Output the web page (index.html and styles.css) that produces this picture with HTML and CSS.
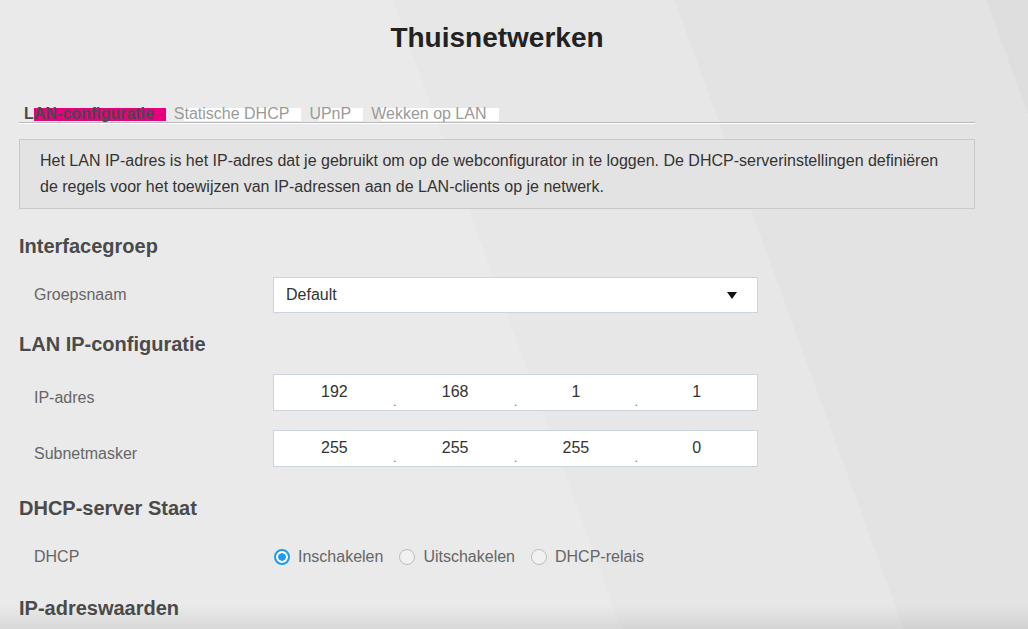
FILE: index.html
```html
<!DOCTYPE html>
<html lang="nl">
<head>
<meta charset="utf-8">
<title>Thuisnetwerken</title>
<link rel="stylesheet" href="styles.css">
</head>
<body>
<div class="page">
  <h1 class="title">Thuisnetwerken</h1>

  <nav class="tabs">
    <a class="tab tab--active"><span>LAN-configuratie</span></a>
    <a class="tab"><span>Statische DHCP</span></a>
    <a class="tab"><span>UPnP</span></a>
    <a class="tab"><span>Wekken op LAN</span></a>
  </nav>

  <div class="info">
    Het LAN IP-adres is het IP-adres dat je gebruikt om op de webconfigurator in te loggen. De DHCP-serverinstellingen definiëren<br>
    de regels voor het toewijzen van IP-adressen aan de LAN-clients op je netwerk.
  </div>

  <h2 class="section section--first">Interfacegroep</h2>
  <div class="row">
    <span class="label">Groepsnaam</span>
    <div class="select">
      <span>Default</span>
      <svg class="caret" width="10" height="7" viewBox="0 0 10 7"><polygon points="0,0 10,0 5,7" fill="#111"/></svg>
    </div>
  </div>

  <h2 class="section">LAN IP-configuratie</h2>
  <div class="row row--ip row--tight">
    <span class="label">IP-adres</span>
    <div class="ip">
      <span class="ip-part">192</span><span class="ip-dot">.</span>
      <span class="ip-part">168</span><span class="ip-dot">.</span>
      <span class="ip-part">1</span><span class="ip-dot">.</span>
      <span class="ip-part">1</span>
    </div>
  </div>
  <div class="row row--ip">
    <span class="label">Subnetmasker</span>
    <div class="ip">
      <span class="ip-part">255</span><span class="ip-dot">.</span>
      <span class="ip-part">255</span><span class="ip-dot">.</span>
      <span class="ip-part">255</span><span class="ip-dot">.</span>
      <span class="ip-part">0</span>
    </div>
  </div>

  <h2 class="section section--wide">DHCP-server Staat</h2>
  <div class="row">
    <span class="label">DHCP</span>
    <div class="radios">
      <label class="radio"><span class="radio-mark radio-mark--on"></span>Inschakelen</label>
      <label class="radio"><span class="radio-mark"></span>Uitschakelen</label>
      <label class="radio"><span class="radio-mark"></span>DHCP-relais</label>
    </div>
  </div>

  <h2 class="section section--mid">IP-adreswaarden</h2>
</div>
</body>
</html>
```

FILE: styles.css
```css
html, body {
  margin: 0;
  padding: 0;
  height: 629px;
  overflow: hidden;
}

body {
  font-family: "Liberation Sans", Arial, Helvetica, sans-serif;
  background:
    linear-gradient(to bottom, rgba(0,0,0,0) 605px, rgba(0,0,0,0.08) 629px),
    linear-gradient(70deg, #eaeaea 0 584px, #e7e7e7 584px 849px, #e3e3e3 849px 1142px, #dedede 1142px);
  background-repeat: no-repeat;
  background-size: 1028px 629px;
}

.page {
  width: 956px;
  margin-left: 19px;
}

.title {
  margin: 22px 0 0;
  font-size: 28px;
  line-height: 32px;
  font-weight: bold;
  color: #222;
  text-align: center;
}

.tabs {
  display: flex;
  align-items: flex-start;
  gap: 18px;
  margin-top: 54px;
  padding-left: 15px;
  padding-bottom: 1px;
  border-bottom: 1px solid #b9b9b9;
  box-shadow: 0 1px 0 #fff;
}

.tab {
  display: block;
  height: 13px;
  line-height: 12px;
  font-size: 16px;
  color: #9a9a9a;
  background: #fff;
  padding-right: 12px;
  white-space: nowrap;
  cursor: pointer;
}

.tab span {
  display: inline-block;
  margin-left: -10px;
}

.tab--active {
  background: #e6007e;
  color: #4a4a4a;
  font-weight: bold;
}

.info {
  margin-top: 16px;
  border: 1px solid #c9c9c9;
  background: #e3e3e3;
  padding: 8px 20px;
  font-size: 16px;
  line-height: 26px;
  color: #333;
}

.section {
  margin: 19px 0 0;
  font-size: 20px;
  line-height: 24px;
  font-weight: bold;
  color: #4a4a4a;
}

.section--first { margin-top: 25px; }
.section--wide { margin-top: 29px; }
.section--mid { margin-top: 21px; }

.row {
  display: flex;
  align-items: center;
  height: 36px;
  margin-top: 19px;
}

.row--tight { margin-top: 18px; }

.row--ip { height: 37px; }

.label {
  width: 254px;
  padding-left: 15px;
  box-sizing: border-box;
  font-size: 16px;
  color: #666;
  flex: none;
}

.row--ip .label { padding-top: 10px; }

.select {
  width: 485px;
  height: 36px;
  box-sizing: border-box;
  border: 1px solid #ccd4de;
  background: #fff;
  display: flex;
  align-items: center;
  justify-content: space-between;
  padding: 0 20px 0 12px;
  font-size: 16px;
  color: #333;
}

.caret { display: block; }

.ip {
  width: 485px;
  height: 37px;
  box-sizing: border-box;
  border: 1px solid #ccd4de;
  background: #fff;
  display: flex;
}

.ip-part {
  flex: 1 1 0;
  text-align: center;
  line-height: 34px;
  font-size: 16px;
  color: #333;
}

.ip-dot {
  flex: 0 0 0;
  width: 0;
  min-width: 0;
  display: flex;
  justify-content: center;
  align-items: flex-start;
  padding-top: 22px;
  font-size: 13px;
  line-height: 10px;
  color: #777;
}

.radios {
  display: flex;
  align-items: center;
  gap: 16px;
  padding-left: 1px;
}

.radio {
  display: flex;
  align-items: center;
  gap: 8px;
  font-size: 16px;
  color: #666;
}

.radio-mark {
  width: 16px;
  height: 16px;
  box-sizing: border-box;
  border-radius: 50%;
  border: 1px solid #bdbdbd;
  background: #f1f1f1;
  flex: none;
}

.radio-mark--on {
  border: 2px solid #1a9cf2;
  background: radial-gradient(circle, #1a9cf2 0 3.5px, #fff 4px);
}
```
